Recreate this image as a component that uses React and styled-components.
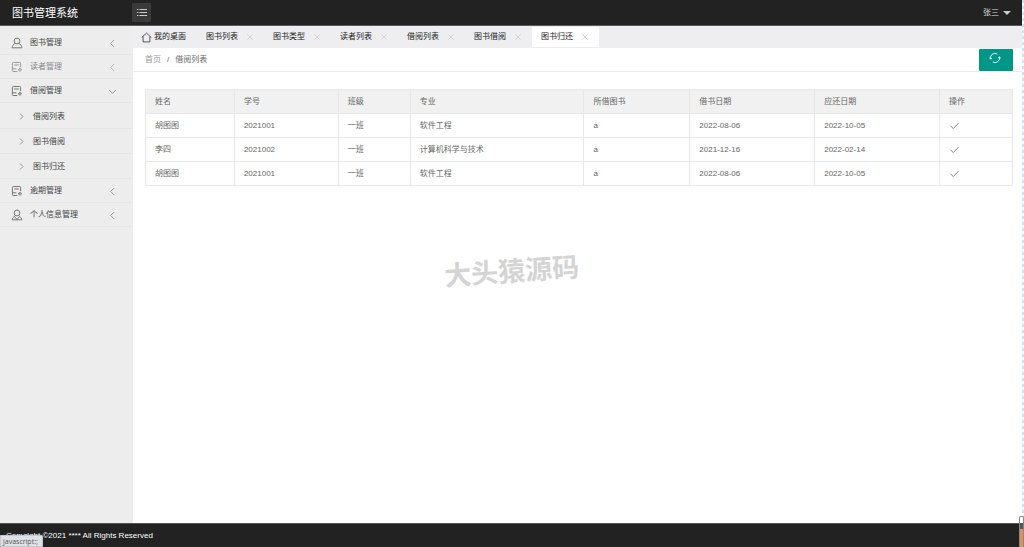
import React from 'react';
import styled, { createGlobalStyle, css } from 'styled-components';

const GlobalStyle = createGlobalStyle`
  * { box-sizing: border-box; }
  html, body, #root { height: 100%; }
  body {
    margin: 0;
    background: #fff;
    color: #333;
    font: 8px/12px "Liberation Sans", "Noto Sans CJK SC", sans-serif;
  }
  button { font: inherit; color: inherit; border: 0; padding: 0; background: none; cursor: pointer; }
  a { color: inherit; text-decoration: none; }
  ul { list-style: none; margin: 0; padding: 0; }
`;

const Page = styled.div`
  position: relative;
  display: flex;
  flex-direction: column;
  min-height: 100%;
`;

const Header = styled.header`
  display: flex;
  align-items: center;
  height: 26px;
  padding-right: 13px;
  background: #222;
  color: #fff;
  border-bottom: 1px solid #5c5759;
`;

const Brand = styled.a`
  width: 132px;
  padding-left: 12px;
  font-size: 11px;
  line-height: 24px;
`;

const MenuToggle = styled.button`
  display: flex;
  align-items: center;
  justify-content: center;
  width: 19px;
  height: 19px;
  border-radius: 1px;
  background: #3a3a3a;
  color: #ccc;
`;

const UserMenu = styled.button`
  display: flex;
  align-items: center;
  gap: 4px;
  margin-left: auto;
  color: #ddd;
`;

const Caret = styled.span`
  border: 4px solid transparent;
  border-top-color: #ccc;
  border-bottom: 0;
`;

const Body = styled.div`
  display: flex;
  flex: 1;
`;

const Sidebar = styled.nav`
  flex: none;
  width: 133px;
  padding-top: 5px;
  background: #ededed;
`;

const NavButton = styled.button`
  display: flex;
  align-items: center;
  width: 100%;
  height: 24px;
  padding: 1px 16px 0 11px;
  gap: 7px;
  border-bottom: 1px solid #e5e5e5;
  text-align: left;
  color: ${(p) => (p.$muted ? '#888' : '#444')};
  svg { color: ${(p) => (p.$muted ? '#999' : '#777')}; }
`;

const NavLabel = styled.span`
  flex: 1;
`;

const SubMenu = styled.ul`
  padding-top: 1px;
`;

const SubLink = styled.a`
  display: flex;
  align-items: center;
  gap: 7px;
  height: 25px;
  padding: 1px 0 0 17px;
  border-bottom: 1px solid #e5e5e5;
  color: #444;
  svg { color: #777; }
`;

const Main = styled.main`
  flex: 1;
  min-width: 0;
`;

const Tabs = styled.ul`
  display: flex;
  height: 22px;
  padding-top: 1px;
  background: #eeeef0;
`;

const Tab = styled.li`
  display: flex;
  align-items: center;
  width: ${(p) => (p.$home ? '64px' : '67px')};
  height: 20px;
  padding-left: ${(p) => (p.$home ? '8px' : '9px')};
  gap: ${(p) => (p.$home ? '2px' : '8px')};
  color: #222;
  ${(p) => p.$active && css`background: #fff;`}
`;

const TabClose = styled.button`
  display: flex;
  color: #c4c4c4;
`;

const Toolbar = styled.div`
  display: flex;
  align-items: center;
  justify-content: space-between;
  height: 24px;
  padding: 0 11px 0 12px;
  border-bottom: 1px solid #ececec;
`;

const Crumbs = styled.nav`
  display: flex;
  gap: 6px;
  color: #666;
`;

const Crumb = styled.a`
  color: ${(p) => (p.$current ? '#666' : '#999')};
`;

const Refresh = styled.button`
  display: flex;
  align-items: flex-start;
  justify-content: center;
  width: 34px;
  height: 22px;
  padding: 3px 2px 0 0;
  border-radius: 1px;
  background: #009688;
  color: #fff;
`;

const TableArea = styled.div`
  padding: 17px 11px 0 12px;
`;

const Table = styled.table`
  width: 100%;
  table-layout: fixed;
  border-collapse: collapse;
  color: #666;
  th, td {
    height: 24px;
    padding: 0 9px;
    border: 1px solid #e8e8e8;
    text-align: left;
    font-weight: 400;
  }
  th { background: #f1f1f1; }
`;

const Col = styled.col`
  width: ${(p) => p.$share}%;
`;

const ReturnButton = styled.button`
  display: flex;
  color: #666;
`;

const Footer = styled.footer`
  height: 24px;
  padding-left: 6px;
  border-top: 1px solid #555;
  background: #222;
  color: #fff;
  line-height: 24px;
`;

const Watermark = styled.div`
  position: absolute;
  top: 252px;
  left: 50%;
  width: 136px;
  margin-left: -68px;
  transform: rotate(-4deg);
  color: #d4d4d4;
  font: 700 27px/36px "Noto Sans CJK SC", sans-serif;
  white-space: nowrap;
  pointer-events: none;
`;

const StatusBubble = styled.div`
  position: absolute;
  left: 0;
  bottom: 0;
  height: 12px;
  padding: 0 4px 0 2px;
  border: 1px solid #c4c8cc;
  border-radius: 0 2px 0 0;
  background: #dee1e6;
  color: #555;
  font: 7px/12px "Open Sans", sans-serif;
`;

const EdgeDots = styled.div`
  position: absolute;
  top: 0;
  right: 0;
  bottom: 24px;
  width: 2px;
  background: repeating-linear-gradient(#c5e5fb 0 3px, #fff 3px 6px);
`;

const EdgeGauge = styled.div`
  position: absolute;
  right: 0;
  bottom: 0;
  width: 5px;
  height: 31px;
  border: 1px solid #888;
  border-bottom: 0;
  border-radius: 2px 2px 0 0;
  background: linear-gradient(#fff 0 6px, #555 6px 12px, #e0905a 12px);
`;

const Icon = ({ size = 12, children, sw = 1 }) => (
  <svg width={size} height={size} viewBox="0 0 12 12" fill="none" stroke="currentColor" strokeWidth={sw} aria-hidden="true">
    {children}
  </svg>
);

const icons = {
  user: (
    <Icon>
      <circle cx="6" cy="4" r="2.9" />
      <path d="M4.3 6.4C2.4 7.2 1.3 8.7 1.1 10.8h9.8C10.7 8.7 9.6 7.2 7.7 6.4" />
    </Icon>
  ),
  form: (
    <Icon>
      <path d="M6.3 10.5H2.2a.8.8 0 0 1-.8-.8V2.3a.8.8 0 0 1 .8-.8h6.6a.8.8 0 0 1 .8.8v3.9" />
      <path d="M3.2 4h4.6M1.6 7.8h3.8" />
      <path d="M8.9 11V7.2M7 9l1.9-1.9L10.8 9H7" strokeWidth="0.8" />
    </Icon>
  ),
  member: (
    <Icon>
      <circle cx="6" cy="4" r="2.9" />
      <path d="M4.3 6.5C4.2 7.8 1.2 8 1.1 10.8h9.8C10.8 8 7.8 7.8 7.7 6.5M3.8 8l2.2 2.4L8.2 8" />
    </Icon>
  ),
};

const Chevron = ({ dir }) => {
  const paths = { left: 'M8 1.5L3.5 6 8 10.5', right: 'M4 2L8 6 4 10', down: 'M1.5 4L6 8.5 10.5 4' };
  return (
    <Icon size={9}>
      <path d={paths[dir]} />
    </Icon>
  );
};

const menu = [
  { label: '图书管理', icon: 'user' },
  { label: '读者管理', icon: 'form', muted: true },
  { label: '借阅管理', icon: 'form', children: ['借阅列表', '图书借阅', '图书归还'] },
  { label: '逾期管理', icon: 'form' },
  { label: '个人信息管理', icon: 'member' },
];

const tabs = ['图书列表', '图书类型', '读者列表', '借阅列表', '图书借阅', '图书归还'];

const columns = [
  ['姓名', 89], ['学号', 104], ['班级', 72], ['专业', 174],
  ['所借图书', 106], ['借书日期', 125], ['应还日期', 125], ['操作', 73],
];

const rows = [
  ['胡图图', '2021001', '一班', '软件工程', 'a', '2022-08-06', '2022-10-05'],
  ['李四', '2021002', '一班', '计算机科学与技术', 'a', '2021-12-16', '2022-02-14'],
  ['胡图图', '2021001', '一班', '软件工程', 'a', '2022-08-06', '2022-10-05'],
];

export default function App() {
  return (
    <Page lang="zh-CN">
      <GlobalStyle />
      <Header>
        <Brand href="#">图书管理系统</Brand>
        <MenuToggle aria-label="菜单">
          <Icon>
            <path d="M3.5 2.5H11M3.5 5.5H11M3.5 8.5H11M1 2.5h1.4M1 5.5h1.4M1 8.5h1.4" />
          </Icon>
        </MenuToggle>
        <UserMenu>张三<Caret /></UserMenu>
      </Header>
      <Body>
        <Sidebar>
          <ul>
            {menu.map((m) => (
              <li key={m.label}>
                <NavButton $muted={m.muted} aria-expanded={Boolean(m.children)}>
                  {icons[m.icon]}
                  <NavLabel>{m.label}</NavLabel>
                  <Chevron dir={m.children ? 'down' : 'left'} />
                </NavButton>
                {m.children && (
                  <SubMenu>
                    {m.children.map((c) => (
                      <li key={c}>
                        <SubLink href="#"><Chevron dir="right" />{c}</SubLink>
                      </li>
                    ))}
                  </SubMenu>
                )}
              </li>
            ))}
          </ul>
        </Sidebar>
        <Main>
          <Tabs>
            <Tab $home>
              <Icon size={11} sw={0.8}>
                <path d="M.8 6L6 1.2 11.2 6M2.3 5v5.8h7.4V5" />
              </Icon>
              我的桌面
            </Tab>
            {tabs.map((t) => (
              <Tab key={t} $active={t === '图书归还'}>
                {t}
                <TabClose aria-label={`关闭${t}`}>
                  <Icon size={8}><path d="M2 2l8 8M10 2l-8 8" /></Icon>
                </TabClose>
              </Tab>
            ))}
          </Tabs>
          <Toolbar>
            <Crumbs>
              <Crumb href="#">首页</Crumb>
              <span>/</span>
              <Crumb $current href="#">借阅列表</Crumb>
            </Crumbs>
            <Refresh aria-label="刷新">
              <Icon sw={0.9}>
                <path d="M1.5 7A4.6 4.6 0 0 1 8.3 2M10.5 5A4.6 4.6 0 0 1 3.7 10M.4 5.6L1.5 7.2 3 6M11.6 6.4L10.5 4.8 9 6" />
              </Icon>
            </Refresh>
          </Toolbar>
          <TableArea>
            <Table>
              <colgroup>
                {columns.map(([name, w]) => <Col key={name} $share={(w / 868) * 100} />)}
              </colgroup>
              <thead>
                <tr>{columns.map(([name]) => <th key={name} scope="col">{name}</th>)}</tr>
              </thead>
              <tbody>
                {rows.map((r, i) => (
                  <tr key={i}>
                    {r.map((v, j) => <td key={j}>{v}</td>)}
                    <td>
                      <ReturnButton aria-label="归还">
                        <Icon size={10}><path d="M1.5 5.5L5 9l6.5-6.5" /></Icon>
                      </ReturnButton>
                    </td>
                  </tr>
                ))}
              </tbody>
            </Table>
          </TableArea>
        </Main>
      </Body>
      <Footer>Copyright ©2021 **** All Rights Reserved</Footer>
      <Watermark>大头猿源码</Watermark>
      <EdgeDots />
      <EdgeGauge />
      <StatusBubble>javascript:;</StatusBubble>
    </Page>
  );
}
